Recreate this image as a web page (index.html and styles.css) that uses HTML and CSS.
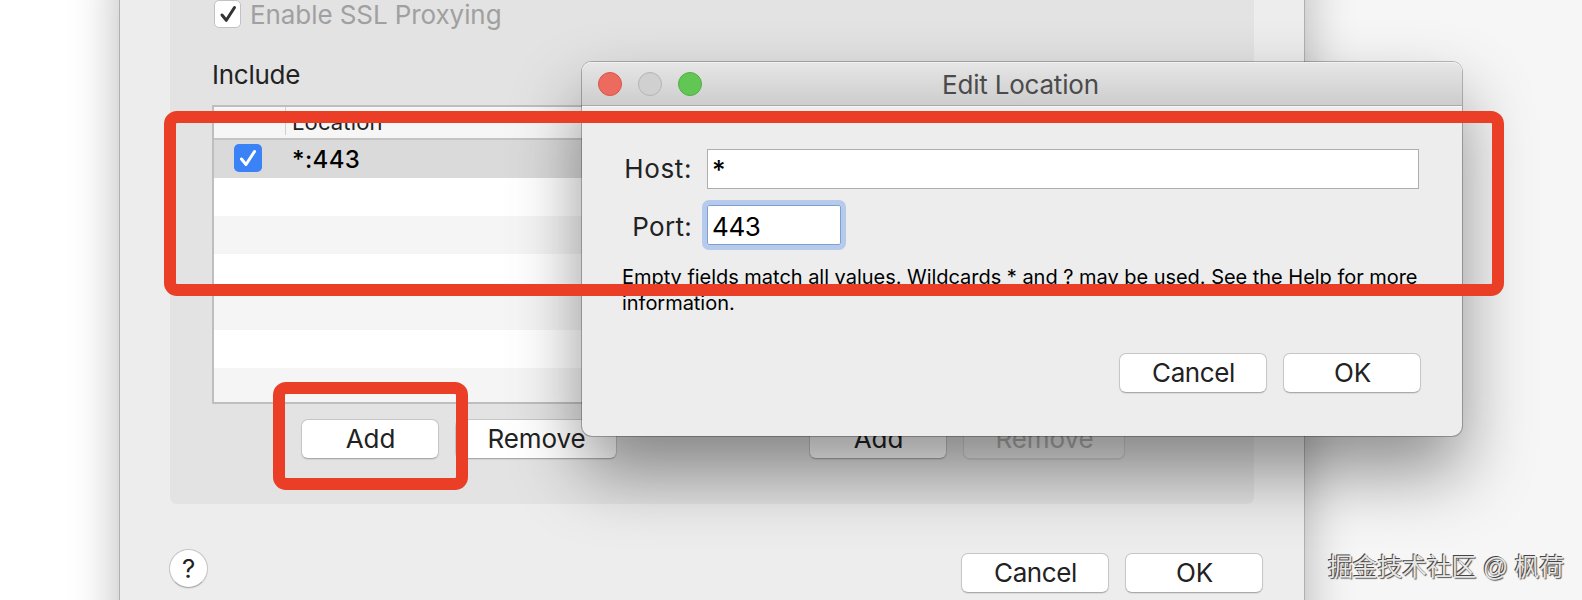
FILE: index.html
```html
<!DOCTYPE html>
<html lang="en">

<head>
    <meta charset="UTF-8">
    <meta name="viewport" content="width=device-width, initial-scale=1.0">
    <link rel="stylesheet" href="styles.css">
    <title>Edit Location</title>
</head>

<body>
    <div class="window settings">
        <div class="panel">
            <div class="enable">
                <span class="check">
                    <svg viewBox="0 0 28 28" width="28" height="28"><path d="M8 15l4.300 5.300L20.500 7.500" /></svg>
                </span>
                <span class="enable-text">Enable SSL Proxying</span>
            </div>
            <div class="columns">
                <div class="column">
                    <div class="include">Include</div>
                    <div class="table">
                        <div class="table-head"><span>Location</span></div>
                        <div class="row selected">
                            <span class="check blue">
                                <svg viewBox="0 0 28 28" width="28" height="28"><path d="M7.500 15l4.500 5.500L20.500 7.500" /></svg>
                            </span>
                            <span class="address">*:443</span>
                        </div>
                        <div class="row"></div>
                        <div class="row"></div>
                        <div class="row"></div>
                        <div class="row"></div>
                        <div class="row"></div>
                        <div class="row"></div>
                    </div>
                    <div class="buttons">
                        <button type="button" class="small">Add</button>
                        <button type="button" class="large">Remove</button>
                    </div>
                </div>
                <div class="column">
                    <div class="buttons">
                        <button type="button" class="small">Add</button>
                        <button type="button" class="large" disabled>Remove</button>
                    </div>
                </div>
            </div>
        </div>
        <div class="footer">
            <button type="button" class="help">?</button>
            <div class="footer-buttons">
                <button type="button" class="cancel">Cancel</button>
                <button type="button" class="small">OK</button>
            </div>
        </div>
    </div>

    <div class="window dialog">
        <div class="titlebar">
            <span class="light red"></span>
            <span class="light"></span>
            <span class="light green"></span>
            <span class="title">Edit Location</span>
        </div>
        <form class="form">
            <label for="host">Host:</label>
            <input type="text" id="host" value="*">
            <label for="port">Port:</label>
            <input type="text" id="port" class="focused" value="443">
        </form>
        <p class="hint">Empty fields match all values. Wildcards * and ? may be used. See the Help for more<br>information.</p>
        <div class="dialog-buttons">
            <button type="button" class="cancel">Cancel</button>
            <button type="button" class="small">OK</button>
        </div>
    </div>

    <!-- Red marks over the windows -->
    <div class="mark mark-fields"></div>
    <div class="mark mark-add"></div>

    <div class="watermark">掘金技术社区 @ 枫荷</div>
</body>

</html>
```
FILE: styles.css
```css
* {
    box-sizing: border-box;
}

body {
    margin: 0;
    height: 600px;
    position: relative;
    overflow: hidden;
    background: linear-gradient(to right, #fff 50%, #f6f6f6 50%);
    font-family: Inter, "Liberation Sans", sans-serif;
    font-size: 26px;
    color: #222;
}

.window {
    position: absolute;
    background: #ededed;
}

.settings {
    left: 119px;
    top: -100px;
    width: 1186px;
    height: 700px;
    padding: 100px 50px 0;
    border: 1px solid #b0b0b0;
    border-width: 0 1px;
    box-shadow: 0 60px 46px rgba(0, 0, 0, .28);
}

.panel {
    height: 504px;
    padding: 0 40px 0 42px;
    background: #e3e3e3;
    border-radius: 0 0 7px 7px;
}

.enable {
    display: flex;
    height: 59px;
    padding-left: 2px;
}

.check {
    width: 27px;
    height: 28px;
    border: 1px solid #c2c2c2;
    border-radius: 5px;
    background: #fff;
}

.check svg {
    display: block;
    margin: -1px;
    fill: none;
    stroke: #333;
    stroke-width: 3;
    stroke-linecap: round;
    stroke-linejoin: round;
}

.enable-text {
    margin-left: 9px;
    line-height: 30px;
    color: #a0a0a0;
    letter-spacing: -0.08px;
}

.columns {
    display: flex;
    justify-content: space-between;
    height: 400px;
}

.column {
    width: 494px;
    display: flex;
    flex-direction: column;
    justify-content: flex-end;
}

.include {
    height: 45px;
    line-height: 30px;
    letter-spacing: -0.25px;
}

.table {
    height: 299px;
    border: 2px solid #bebebe;
    background: #fff;
    overflow: hidden;
}

.table-head {
    height: 33px;
    padding-left: 71px;
    border-bottom: 2px solid #c4c4c4;
    background: #f6f6f6;
}

.table-head span {
    display: block;
    height: 28px;
    padding-left: 6px;
    border-left: 1px solid #d0d0d0;
    font-size: 22px;
    line-height: 31px;
    letter-spacing: 0.15px;
}

.row {
    height: 38px;
    display: flex;
    align-items: center;
}

.row:nth-child(2n+4) {
    background: #f5f5f5;
}

.row.selected {
    background: #dadada;
    padding-left: 20px;
}

.check.blue {
    width: 28px;
    height: 28px;
    border: none;
    background: #3b82f7;
    margin-top: -2px;
}

.check.blue svg {
    margin: 0;
    stroke: #fff;
}

.address {
    margin-left: 30px;
    font-size: 24px;
    font-weight: 450;
    letter-spacing: 0.4px;
    color: #000;
}

.buttons {
    display: flex;
    justify-content: center;
    gap: 16px;
    margin-top: 15px;
}

button {
    height: 40px;
    padding: 0 0 0 1px;
    border: 1px solid #c6c6c6;
    border-bottom-color: #aaa;
    border-radius: 7px;
    background: #fff;
    box-shadow: 0 1px 1px rgba(0, 0, 0, .08);
    font-family: inherit;
    font-size: 26px;
    line-height: 36px;
    letter-spacing: -0.1px;
    color: #222;
}

button:disabled {
    background: #e9e9e9;
    border-color: #d0d0d0;
    color: #adadad;
}

.small {
    width: 138px;
}

.large {
    width: 162px;
}

.cancel {
    width: 148px;
    letter-spacing: -0.4px;
}

.footer {
    display: flex;
    justify-content: space-between;
    margin: 45px -9px 0 -1px;
}

.footer-buttons {
    display: flex;
    gap: 16px;
    margin-top: 4px;
}

.help {
    width: 39px;
    height: 39px;
    padding: 0;
    border-radius: 50%;
}

.dialog {
    left: 582px;
    top: 62px;
    width: 880px;
    height: 374px;
    border-radius: 10px;
    box-shadow: 0 0 0 1px rgba(0, 0, 0, .25), 0 36px 70px rgba(0, 0, 0, .42);
}

.titlebar {
    height: 44px;
    display: flex;
    align-items: center;
    gap: 16px;
    padding-left: 16px;
    border-bottom: 1px solid #a9a9a9;
    border-radius: 9px 9px 0 0;
    background: linear-gradient(#e6e6e6, #cdcdcd);
    box-shadow: inset 0 1px #f2f2f2, 0 1px #f8f8f8;
}

.light {
    width: 24px;
    height: 24px;
    border: 1px solid #b4b4b4;
    border-radius: 50%;
    background: #d0d0d0;
}

.light.red {
    background: #ed6a5e;
    border-color: #d8564c;
}

.light.green {
    background: #62c655;
    border-color: #53ad45;
}

.title {
    margin-left: 224px;
    padding-top: 2px;
    letter-spacing: -0.2px;
    color: #4b4b4b;
    white-space: nowrap;
}

.form {
    display: grid;
    grid-template-columns: 110px 1fr;
    grid-auto-rows: 40px;
    column-gap: 15px;
    row-gap: 16px;
    padding: 43px 43px 0 0;
}

.form label {
    text-align: right;
    line-height: 40px;
    letter-spacing: 0.6px;
}

.form label[for="port"] {
    line-height: 43px;
    letter-spacing: 0.3px;
}

.form input {
    width: 712px;
    height: 40px;
    padding: 0 4px;
    border: 1px solid #aeaeae;
    background: #fff;
    font-family: inherit;
    font-size: 26px;
    font-weight: 500;
    color: #000;
    outline: none;
}

.form .focused {
    width: 134px;
    padding-top: 3px;
    border-color: #7f9fd4;
    outline: 5px solid #b6caec;
    border-radius: 2px;
    font-weight: 400;
    letter-spacing: -0.4px;
}

.hint {
    margin: 19px 0 0 40px;
    font-size: 20px;
    line-height: 26px;
    letter-spacing: -0.03px;
    color: #000;
    white-space: nowrap;
}

.dialog-buttons {
    display: flex;
    justify-content: flex-end;
    gap: 16px;
    padding: 37px 41px 0 0;
}

.mark {
    position: absolute;
    border: 12px solid #ea3f26;
    border-radius: 13px;
}

.mark-fields {
    left: 164px;
    top: 111px;
    width: 1340px;
    height: 185px;
}

.mark-add {
    left: 273px;
    top: 382px;
    width: 195px;
    height: 108px;
}

.watermark {
    position: absolute;
    left: 1328px;
    top: 547px;
    font-family: "Liberation Sans", "Noto Sans CJK SC", sans-serif;
    font-size: 25px;
    letter-spacing: -0.3px;
    color: #e6e6e6;
    text-shadow: -1px -1px 0 #444, 1px 1px 1px #555;
    white-space: nowrap;
}
```
